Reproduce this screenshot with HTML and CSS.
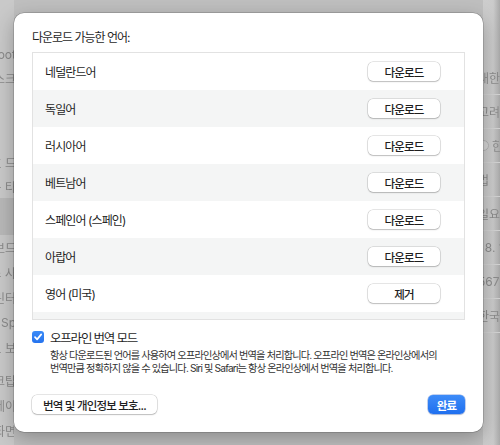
FILE: index.html
```html
<!DOCTYPE html>
<html lang="ko">
<head>
<meta charset="utf-8">
<title>번역 언어</title>
<link rel="stylesheet" href="styles.css">
</head>
<body>
<div class="bg-left">
  <div class="bl first"><span>Bootcamp boot</span></div>
  <div class="bl"><span>디스크</span></div>
  <div class="bl-space"></div>
  <div class="bl"><span>비밀번호 드</span></div>
  <div class="bl"><span>사용자 및 그룹 타</span></div>
  <div class="bl-band"></div>
  <div class="bl2"><span>키보드</span></div>
  <div class="bl2"><span>마우스 사</span></div>
  <div class="bl2"><span>프린터</span></div>
  <div class="bl2"><span>Sp</span></div>
  <div class="bl2"><span>정보 보</span></div>
  <div class="bl-space2"></div>
  <div class="bl2"><span>데스크탑</span></div>
  <div class="bl2"><span>트레이</span></div>
  <div class="bl2"><span>화면</span></div>
</div>

<div class="sheet">
  <div class="title">다운로드 가능한 언어:</div>
  <div class="list">
    <div class="row"><span class="name">네덜란드어</span><button class="btn">다운로드</button></div>
    <div class="row alt"><span class="name">독일어</span><button class="btn">다운로드</button></div>
    <div class="row"><span class="name">러시아어</span><button class="btn">다운로드</button></div>
    <div class="row alt"><span class="name">베트남어</span><button class="btn">다운로드</button></div>
    <div class="row"><span class="name">스페인어 (스페인)</span><button class="btn">다운로드</button></div>
    <div class="row alt"><span class="name">아랍어</span><button class="btn">다운로드</button></div>
    <div class="row"><span class="name">영어 (미국)</span><button class="btn">제거</button></div>
    <div class="row alt"></div>
  </div>

  <label class="check-row">
    <span class="checkbox">
      <svg width="10" height="10" viewBox="0 0 10 10"><path d="M2 5.2 L4.1 7.4 L8.2 2.4" fill="none" stroke="#fff" stroke-width="1.7" stroke-linecap="round" stroke-linejoin="round"/></svg>
    </span>
    <span class="check-label">오프라인 번역 모드</span>
  </label>
  <p class="desc">항상 다운로드된 언어를 사용하여 오프라인상에서 번역을 처리합니다. 오프라인 번역은 온라인상에서의<br>번역만큼 정확하지 않을 수 있습니다. Siri 및 Safari는 항상 온라인상에서 번역을 처리합니다.</p>

  <div class="footer">
    <button class="btn wide">번역 및 개인정보 보호...</button>
    <button class="btn primary">완료</button>
  </div>
</div>

<div class="bg-right">
  <div class="br"><span>대한민국</span></div>
  <div class="br"><span>고려</span></div>
  <div class="br"><span class="radio"></span><span>한</span></div>
  <div class="br"><span>법</span></div>
  <div class="br"><span>일요일</span></div>
  <div class="br"><span>. 8. 1</span></div>
  <div class="br"><span>567</span></div>
  <div class="br"><span>한국어</span></div>
</div>
</body>
</html>
```

FILE: styles.css
```css
* { box-sizing: border-box; }

html, body {
  margin: 0;
  padding: 0;
}

body {
  width: 500px;
  height: 445px;
  overflow: hidden;
  display: flex;
  align-items: stretch;
  background: #bfbfbf;
  font-family: "Inter", "Noto Sans CJK KR", sans-serif;
  color: #1f1f1f;
}

/* ---------- blurred background window ---------- */
.bg-left {
  width: 14px;
  flex: none;
  background: #c9c9c9;
  display: flex;
  flex-direction: column;
  overflow: hidden;
  color: #8a8a8a;
  font-size: 12px;
}
.bg-left .first { margin-top: 42px; }
.bl, .bl2 {
  height: 24px;
  display: flex;
  align-items: center;
  justify-content: flex-end;
  white-space: nowrap;
  flex: none;
}
.bl2 { height: 25px; }
.bl span, .bl2 span { margin-right: -2px; filter: blur(0.3px); }
.bl-space { height: 60px; flex: none; }
.bl-band { height: 37px; flex: none; background: #b9b9b9; }
.bl-space2 { height: 8px; flex: none; }

.bg-right {
  width: 17px;
  flex: none;
  background: linear-gradient(to right, #cdcdcd 0, #cbcbcb 60%, #a9a9a9 100%);
  display: flex;
  flex-direction: column;
  overflow: hidden;
  color: #8c8c8c;
  font-size: 12px;
  padding-top: 61px;
}
.br {
  height: 34px;
  flex: none;
  display: flex;
  align-items: center;
  gap: 3px;
  white-space: nowrap;
  border-bottom: 1px solid #d3d3d3;
  margin-left: -5px;
}
.br span { filter: blur(0.3px); }
.radio {
  width: 11px;
  height: 11px;
  border-radius: 50%;
  border: 1px solid #b3b3b3;
  background: #d6d6d6;
  flex: none;
}

/* ---------- sheet ---------- */
.sheet {
  width: 469px;
  flex: none;
  margin: 13px 0 13px;
  height: 419px;
  background: #ffffff;
  border-radius: 10px;
  box-shadow: 0 0 0 0.5px rgba(0, 0, 0, 0.28), 0 6px 20px rgba(0, 0, 0, 0.28);
  padding: 17px 18px 18px;
  display: flex;
  flex-direction: column;
  position: relative;
  z-index: 1;
}

.title {
  font-size: 12px;
  line-height: 16px;
  letter-spacing: -1px;
  margin-bottom: 6px;
}

.list {
  height: 268px;
  border: 1px solid #e2e2e2;
  overflow: hidden;
  flex: none;
}

.row {
  height: 37px;
  flex: none;
  display: flex;
  align-items: center;
  justify-content: space-between;
  padding: 0 24px 0 12px;
  background: #ffffff;
}
.row.alt { background: #f4f5f5; }

.name {
  font-size: 12px;
  letter-spacing: -0.9px;
}

.btn {
  font-family: inherit;
  font-size: 11.5px;
  letter-spacing: -0.8px;
  color: #1f1f1f;
  height: 19px;
  padding: 0;
  width: 72px;
  border: none;
  border-radius: 5px;
  background: #ffffff;
  box-shadow: 0 0 0 0.5px rgba(0, 0, 0, 0.2), 0 1px 1.5px rgba(0, 0, 0, 0.18);
  display: flex;
  align-items: center;
  justify-content: center;
  font-weight: 500;
}

.check-row {
  display: flex;
  align-items: center;
  gap: 6px;
  margin-top: 10px;
  height: 14px;
}
.checkbox {
  width: 12px;
  height: 12px;
  border-radius: 3px;
  background: linear-gradient(#3b8bf7, #2573ee);
  display: flex;
  align-items: center;
  justify-content: center;
  flex: none;
}
.check-label {
  font-size: 12.5px;
  letter-spacing: -1.2px;
}

.desc {
  margin: 5px 0 0 18px;
  font-size: 10.2px;
  line-height: 13px;
  letter-spacing: -0.85px;
  color: #333333;
}

.footer {
  margin-top: auto;
  display: flex;
  justify-content: space-between;
  align-items: center;
}
.btn.wide {
  width: 125px;
  font-size: 11.5px;
}
.btn.primary {
  width: 37px;
  color: #ffffff;
  font-weight: 600;
  background: linear-gradient(#3d8cf8, #1f6fef);
  box-shadow: 0 0 0 0.5px rgba(20, 80, 200, 0.5), 0 1px 1.5px rgba(0, 0, 0, 0.15);
}
```
